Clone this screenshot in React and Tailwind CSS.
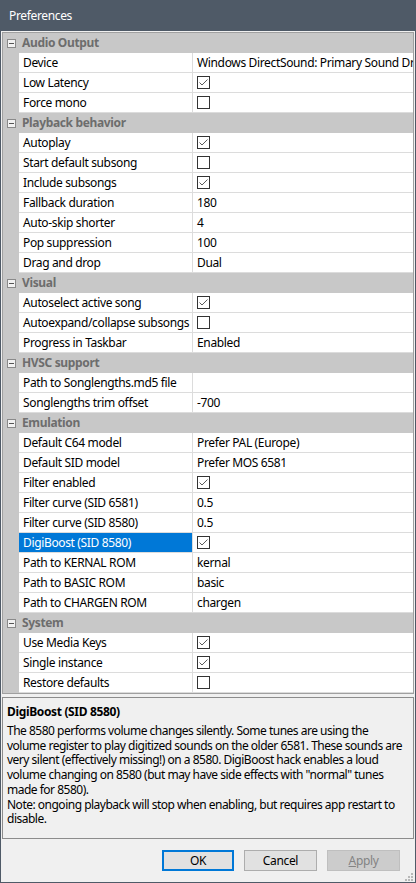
const sections = [
  {
    title: 'Audio Output',
    rows: [
      ['Device', 'Windows DirectSound: Primary Sound Driver'],
      ['Low Latency', true],
      ['Force mono', false],
    ],
  },
  {
    title: 'Playback behavior',
    rows: [
      ['Autoplay', true],
      ['Start default subsong', false],
      ['Include subsongs', true],
      ['Fallback duration', '180'],
      ['Auto-skip shorter', '4'],
      ['Pop suppression', '100'],
      ['Drag and drop', 'Dual'],
    ],
  },
  {
    title: 'Visual',
    rows: [
      ['Autoselect active song', true],
      ['Autoexpand/collapse subsongs', false],
      ['Progress in Taskbar', 'Enabled'],
    ],
  },
  {
    title: 'HVSC support',
    rows: [
      ['Path to Songlengths.md5 file', ''],
      ['Songlengths trim offset', '-700'],
    ],
  },
  {
    title: 'Emulation',
    rows: [
      ['Default C64 model', 'Prefer PAL (Europe)'],
      ['Default SID model', 'Prefer MOS 6581'],
      ['Filter enabled', true],
      ['Filter curve (SID 6581)', '0.5'],
      ['Filter curve (SID 8580)', '0.5'],
      ['DigiBoost (SID 8580)', true],
      ['Path to KERNAL ROM', 'kernal'],
      ['Path to BASIC ROM', 'basic'],
      ['Path to CHARGEN ROM', 'chargen'],
    ],
  },
  {
    title: 'System',
    rows: [
      ['Use Media Keys', true],
      ['Single instance', true],
      ['Restore defaults', false],
    ],
  },
]

const selected = 'DigiBoost (SID 8580)'

function CheckBox({ checked }) {
  return (
    <div className="w-[13px] h-[13px] border border-[#333333] bg-white">
      {checked && (
        <svg width="11" height="11" viewBox="0 0 11 11" className="block">
          <polyline points="1.5,5.5 4,8 9.5,2.5" fill="none" stroke="#5a5a5a" strokeWidth="1" />
        </svg>
      )}
    </div>
  )
}

function Collapse() {
  return (
    <div className="w-[9px] h-[9px] border border-[#8a8a8a] bg-[#f2f2f2] flex items-center justify-center">
      <div className="w-[5px] h-[1px] bg-[#555555]" />
    </div>
  )
}

export default function App() {
  return (
    <div className="w-[416px] h-[883px] bg-[#4f5a67] flex flex-col font-['Noto_Sans',sans-serif] text-[12px] tracking-[-0.35px] text-black overflow-hidden">
      <div className="h-[31px] shrink-0 pl-[9px] flex items-center text-white text-[12px]">Preferences</div>

      <div className="flex-1 mx-[1px] mb-[1px] bg-[#f0f0f0] flex flex-col px-[1px]">
        <div className="mt-[1px] border border-[#a0a0a0] bg-white">
          {sections.map((s) => (
            <div key={s.title}>
              <div className="flex h-[20px] bg-[#c8c8c8]">
                <div className="w-[16px] shrink-0 flex items-center justify-center">
                  <Collapse />
                </div>
                <div className="pl-[3px] leading-[20px] font-bold text-[#6d6d6d]">{s.title}</div>
              </div>
              {s.rows.map(([label, value]) => {
                const isSel = label === selected
                return (
                  <div key={label} className="flex h-[20px]">
                    <div className="w-[16px] shrink-0 bg-[#c8c8c8]" />
                    <div
                      className={`w-[174px] shrink-0 border-r border-b border-[#dcdcdc] pl-[4px] leading-[19px] whitespace-nowrap overflow-hidden ${
                        isSel ? 'bg-[#0078d7] text-white' : ''
                      }`}
                    >
                      {label}
                    </div>
                    <div className="flex-1 min-w-0 border-b border-[#dcdcdc] pl-[4px] leading-[19px] whitespace-nowrap overflow-hidden flex items-center">
                      {typeof value === 'boolean' ? <CheckBox checked={value} /> : value}
                    </div>
                  </div>
                )
              })}
            </div>
          ))}
        </div>

        <div className="mt-[3px] h-[142px] border border-[#8c8c8c] bg-[#f0f0f0] pl-[4px] pt-[6px] overflow-hidden">
          <div className="font-bold leading-[15px] mb-[5px]">DigiBoost (SID 8580)</div>
          <div className="leading-[14.7px] tracking-[-0.5px] whitespace-nowrap">
            The 8580 performs volume changes silently. Some tunes are using the
            <br />
            volume register to play digitized sounds on the older 6581. These sounds are
            <br />
            very silent (effectively missing!) on a 8580. DigiBoost hack enables a loud
            <br />
            volume changing on 8580 (but may have side effects with "normal" tunes
            <br />
            made for 8580).
            <br />
            Note: ongoing playback will stop when enabling, but requires app restart to
            <br />
            disable.
          </div>
        </div>

        <div className="relative flex-1 flex justify-end items-start pt-[11px] pr-[14px] gap-[10px]">
          <button className="w-[72px] h-[21px] bg-[#e1e1e1] border-2 border-[#0078d7] leading-none">OK</button>
          <button className="w-[73px] h-[21px] bg-[#e1e1e1] border border-[#adadad] leading-none">Cancel</button>
          <button className="w-[73px] h-[21px] bg-[#cccccc] border border-[#bfbfbf] text-[#838383] leading-none">
            <span className="underline">A</span>pply
          </button>
          <svg width="9" height="9" viewBox="0 0 9 9" className="absolute right-[1px] bottom-[1px]">
            <rect x="7" y="1" width="2" height="2" fill="#b8b8b8" />
            <rect x="4" y="4" width="2" height="2" fill="#b8b8b8" />
            <rect x="7" y="4" width="2" height="2" fill="#b8b8b8" />
            <rect x="1" y="7" width="2" height="2" fill="#b8b8b8" />
            <rect x="4" y="7" width="2" height="2" fill="#b8b8b8" />
            <rect x="7" y="7" width="2" height="2" fill="#b8b8b8" />
          </svg>
        </div>
      </div>
    </div>
  )
}
